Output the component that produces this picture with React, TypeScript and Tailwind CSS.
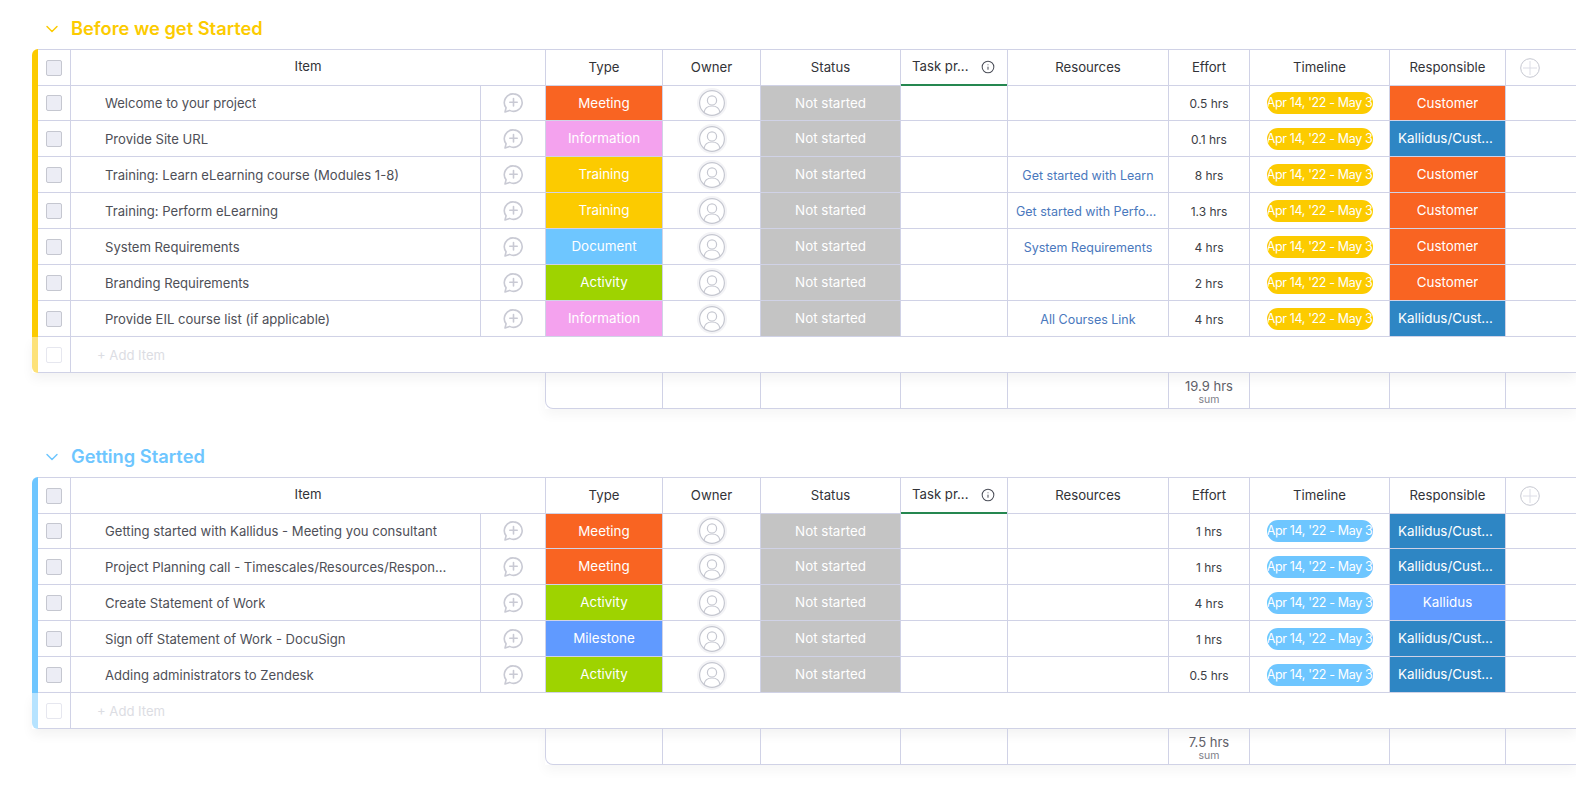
import { ChevronDown, Info } from 'lucide-react';

type Item = {
  name: string;
  type: string;
  resource?: string;
  effort: string;
  responsible: string;
};

type Group = {
  title: string;
  titleColor: string;
  pillColor: string;
  stripe: string;
  stripeLight: string;
  total: string;
  items: Item[];
};

const typeColors: Record<string, string> = {
  Meeting: 'bg-[#f96422]',
  Information: 'bg-[#f4a2ee]',
  Training: 'bg-[#fccb00]',
  Document: 'bg-[#6ec6ff]',
  Activity: 'bg-[#9ed300]',
  Milestone: 'bg-[#609aff]',
  Customer: 'bg-[#f96422]',
  'Kallidus/Customer': 'bg-[#2e86c4]',
  Kallidus: 'bg-[#609aff]',
};

const groups: Group[] = [
  {
    title: 'Before we get Started',
    titleColor: 'text-[#fccb00]',
    pillColor: 'bg-[#fccb00]',
    stripe: 'bg-[#fccb00]',
    stripeLight: 'bg-[#fde27a]',
    total: '19.9 hrs',
    items: [
      { name: 'Welcome to your project', type: 'Meeting', effort: '0.5 hrs', responsible: 'Customer' },
      { name: 'Provide Site URL', type: 'Information', effort: '0.1 hrs', responsible: 'Kallidus/Customer' },
      { name: 'Training: Learn eLearning course (Modules 1-8)', type: 'Training', resource: 'Get started with Learn', effort: '8 hrs', responsible: 'Customer' },
      { name: 'Training: Perform eLearning', type: 'Training', resource: 'Get started with Performing eLearning', effort: '1.3 hrs', responsible: 'Customer' },
      { name: 'System Requirements', type: 'Document', resource: 'System Requirements', effort: '4 hrs', responsible: 'Customer' },
      { name: 'Branding Requirements', type: 'Activity', effort: '2 hrs', responsible: 'Customer' },
      { name: 'Provide EIL course list (if applicable)', type: 'Information', resource: 'All Courses Link', effort: '4 hrs', responsible: 'Kallidus/Customer' },
    ],
  },
  {
    title: 'Getting Started',
    titleColor: 'text-[#6ec6ff]',
    pillColor: 'bg-[#6ec6ff]',
    stripe: 'bg-[#6ec6ff]',
    stripeLight: 'bg-[#b6e3ff]',
    total: '7.5 hrs',
    items: [
      { name: 'Getting started with Kallidus - Meeting you consultant', type: 'Meeting', effort: '1 hrs', responsible: 'Kallidus/Customer' },
      { name: 'Project Planning call - Timescales/Resources/Responsibilities', type: 'Meeting', effort: '1 hrs', responsible: 'Kallidus/Customer' },
      { name: 'Create Statement of Work', type: 'Activity', effort: '4 hrs', responsible: 'Kallidus' },
      { name: 'Sign off Statement of Work - DocuSign', type: 'Milestone', effort: '1 hrs', responsible: 'Kallidus/Customer' },
      { name: 'Adding administrators to Zendesk', type: 'Activity', effort: '0.5 hrs', responsible: 'Kallidus/Customer' },
    ],
  },
];

const edge = 'flex shrink-0 items-center border-r border-b border-[#d0d2e6]';
const cell = `${edge} justify-center`;

function Checkbox({ faded }: { faded?: boolean }) {
  return (
    <div
      className={
        faded
          ? 'h-4 w-4 rounded-[2px] border border-[#e6e7ef] bg-white'
          : 'h-4 w-4 rounded-[2px] border border-[#c5c7d0] bg-[#ecedf5]'
      }
    />
  );
}

function CommentIcon() {
  return (
    <svg width="20" height="20" viewBox="0 0 20 20" fill="none" stroke="#c9cad4" strokeWidth="1.6" strokeLinecap="round" strokeLinejoin="round">
      <path d="M10.5 .9a8.700 8.700 0 1 1-3.900 16.500l-4.600 1.500 1.100-4.100A8.700 8.700 0 0 1 10.500 .9z" />
      <path d="M10.500 5.500v7.500M6.800 9.300h7.400" />
    </svg>
  );
}

function OwnerIcon() {
  return (
    <div className="rounded-full ring-2 ring-[#f3f3f6]">
      <svg width="26" height="26" viewBox="0 0 26 26" fill="none" stroke="#c5c7d0" strokeWidth="1.2" className="block">
        <circle cx="13" cy="13" r="12.400" />
        <circle cx="13" cy="10.400" r="4.600" />
        <path d="M5 22.400c.7-4.200 4-6.400 8-6.400s7.300 2.200 8 6.400" />
      </svg>
    </div>
  );
}

function AddColumnIcon() {
  return (
    <svg width="20" height="20" viewBox="0 0 20 20" fill="none" strokeWidth="1">
      <circle cx="10" cy="10" r="9.300" stroke="#c5c7d0" />
      <path d="M10 3v14M3 10h14" stroke="#dcdde6" />
    </svg>
  );
}

function HeaderRow({ stripe }: { stripe: string }) {
  const heads: [string, string][] = [
    ['Type', 'w-[117px]'],
    ['Owner', 'w-[98px]'],
    ['Status', 'w-[140px]'],
  ];
  const tail: [string, string][] = [
    ['Resources', 'w-[161px]'],
    ['Effort', 'w-[81px]'],
    ['Timeline', 'w-[140px]'],
    ['Responsible', 'w-[116px]'],
  ];
  return (
    <div className="flex h-[37px] text-[13.2px] text-[#323338]">
      <div className={`w-[6px] shrink-0 rounded-tl-lg ${stripe}`} />
      <div className="flex flex-1 border-t border-[#d0d2e6]">
        <div className={`${cell} w-[33px]`}>
          <Checkbox />
        </div>
        <div className={`${cell} w-[475px] pb-[2px]`}>Item</div>
        {heads.map(([label, width]) => (
          <div key={label} className={`${cell} ${width}`}>
            {label}
          </div>
        ))}
        <div className={`${edge} relative w-[107px] justify-between pr-[12px] pb-[2px] pl-[11px]`}>
          <span>Task pr...</span>
          <Info size={14} strokeWidth={1.75} className="text-[#4b4e58]" />
          <div className="absolute right-0 -bottom-px left-0 h-[2px] bg-[#258750]" />
        </div>
        {tail.map(([label, width]) => (
          <div key={label} className={`${cell} ${width}`}>
            {label}
          </div>
        ))}
        <div className="flex flex-1 items-center border-b border-[#d0d2e6] pl-[14px]">
          <AddColumnIcon />
        </div>
      </div>
    </div>
  );
}

function ItemRow({ item, stripe, pill, first }: { item: Item; stripe: string; pill: string; first: boolean }) {
  return (
    <div className={first ? 'flex h-[35px]' : 'flex h-[36px]'}>
      <div className={`w-[6px] shrink-0 ${stripe}`} />
      <div className={`${cell} w-[33px]`}>
        <Checkbox />
      </div>
      <div className={`${edge} w-[410px] pt-[2px] pr-[32px] pl-[34px] text-[13.1px] text-[#4e4f57]`}>
        <span className="truncate">{item.name}</span>
      </div>
      <div className={`${cell} w-[65px]`}>
        <CommentIcon />
      </div>
      <div className={`${cell} w-[117px] text-[13.400px] text-white ${typeColors[item.type]}`}>{item.type}</div>
      <div className={`${cell} w-[98px]`}>
        <OwnerIcon />
      </div>
      <div className={`${cell} w-[140px] bg-[#c4c4c4] text-[13.400px] text-white`}>Not started</div>
      <div className={`${cell} w-[107px]`} />
      <div className={`${cell} w-[161px] px-2 pt-[3px] text-[12.500px] text-[#4a78bd]`}>
        {item.resource && <span className="truncate">{item.resource}</span>}
      </div>
      <div className={`${cell} w-[81px] pt-[2px] text-[12px] text-[#3c3d45]`}>{item.effort}</div>
      <div className={`${cell} w-[140px]`}>
        <div className={`h-[22px] w-[106px] overflow-hidden rounded-full text-center text-[12.500px] leading-[22px] tracking-[-0.36px] whitespace-nowrap text-white ${pill}`}>
          Apr 14, '22 - May 3
        </div>
      </div>
      <div className={`${cell} w-[116px] px-2 text-[13.400px] text-white ${typeColors[item.responsible]}`}>
        <span className="truncate">{item.responsible}</span>
      </div>
      <div className="flex-1 border-b border-[#d0d2e6]" />
    </div>
  );
}

function AddRow({ stripe }: { stripe: string }) {
  return (
    <div className="flex h-[36px] shadow-[0_6px_12px_rgba(0,0,0,0.05)]">
      <div className={`w-[6px] shrink-0 rounded-bl-lg ${stripe}`} />
      <div className={`${cell} w-[33px]`}>
        <Checkbox faded />
      </div>
      <div className="flex flex-1 items-center border-b border-[#d0d2e6] pt-[2px] pl-[26px] text-[13.100px] text-[#dcdde3]">+ Add Item</div>
    </div>
  );
}

function SummaryRow({ total }: { total: string }) {
  const widths = ['w-[107px]', 'w-[161px]'];
  return (
    <div className="ml-[513px] flex h-[36px] shadow-[0_6px_12px_rgba(0,0,0,0.04)]">
      <div className={`${cell} w-[118px] rounded-bl-lg border-l`} />
      <div className={`${cell} w-[98px]`} />
      <div className={`${cell} w-[140px]`} />
      {widths.map((width) => (
        <div key={width} className={`${cell} ${width}`} />
      ))}
      <div className={`${cell} w-[81px] flex-col pt-[2px] text-[13px] leading-[15px] text-[#5f6068]`}>
        {total}
        <span className="text-[10.500px] leading-[11px] text-[#7d7e88]">sum</span>
      </div>
      <div className={`${cell} w-[140px]`} />
      <div className={`${cell} w-[116px]`} />
      <div className="flex-1 border-b border-[#d0d2e6]" />
    </div>
  );
}

function BoardGroup({ group }: { group: Group }) {
  return (
    <section>
      <div className="mb-[6px] flex h-[28px] items-center">
        <ChevronDown size={20} strokeWidth={1.75} className={`ml-[42px] ${group.titleColor}`} />
        <h2 className={`ml-[9px] text-[18.300px] font-semibold ${group.titleColor}`}>{group.title}</h2>
      </div>
      <div className="ml-[32px]">
        <HeaderRow stripe={group.stripe} />
        {group.items.map((item, i) => (
          <ItemRow key={item.name} item={item} stripe={group.stripe} pill={group.pillColor} first={i === 0} />
        ))}
        <AddRow stripe={group.stripeLight} />
        <SummaryRow total={group.total} />
      </div>
    </section>
  );
}

export default function App() {
  return (
    <div className="flex h-screen flex-col gap-[34px] overflow-hidden bg-white pt-[15px] font-['Inter',sans-serif]">
      {groups.map((group) => (
        <BoardGroup key={group.title} group={group} />
      ))}
    </div>
  );
}
